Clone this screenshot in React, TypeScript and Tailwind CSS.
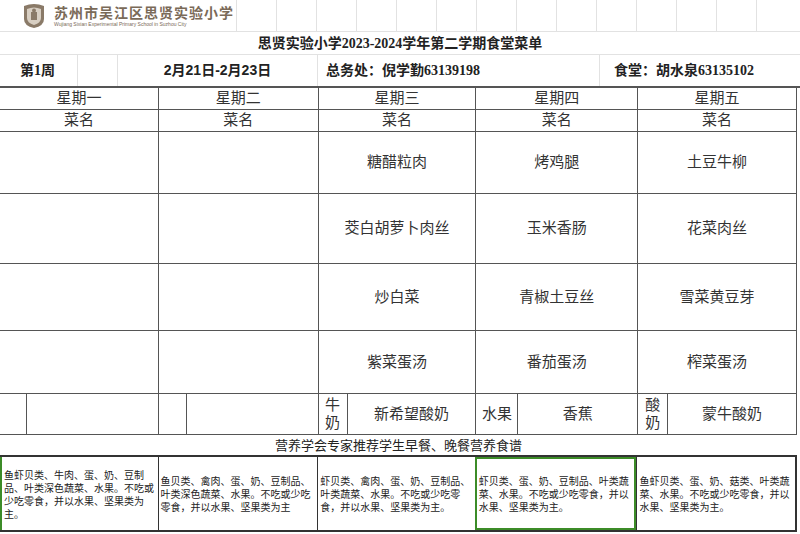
const W = ['w-[158px]', 'w-[160px]', 'w-[158px]', 'w-[162px]', 'w-[159px]'];
const font = { fontFamily: '"Liberation Serif","Noto Sans CJK SC",serif' };

const dishes = [
  ['糖醋粒肉', '烤鸡腿', '土豆牛柳', 'h-[62px]'],
  ['茭白胡萝卜肉丝', '玉米香肠', '花菜肉丝', 'h-[70px]'],
  ['炒白菜', '青椒土豆丝', '雪菜黄豆芽', 'h-[67px]'],
  ['紫菜蛋汤', '番茄蛋汤', '榨菜蛋汤', 'h-[63px]'],
];

const nutrition = [
  '鱼虾贝类、牛肉、蛋、奶、豆制品、叶类深色蔬菜、水果。不吃或少吃零食，并以水果、坚果类为主。',
  '鱼贝类、禽肉、蛋、奶、豆制品、叶类深色蔬菜、水果。不吃或少吃零食，并以水果、坚果类为主',
  '虾贝类、禽肉、蛋、奶、豆制品、叶类蔬菜、水果。不吃或少吃零食，并以水果、坚果类为主。',
  '虾贝类、蛋、奶、豆制品、叶类蔬菜、水果。不吃或少吃零食，并以水果、坚果类为主。',
  '鱼虾贝类、蛋、奶、菇类、叶类蔬菜、水果。不吃或少吃零食，并以水果、坚果类为主。',
];

function Logo() {
  return (
    <div className="flex items-center gap-2 pl-[22px] h-[32px] whitespace-nowrap">
      <svg width="24" height="26" viewBox="0 0 24 26">
        <path d="M2 3 Q12 -1 22 3 L22 16 Q22 23 12 25 Q2 23 2 16 Z" fill="#8a7a68" />
        <path d="M5 6 Q12 3 19 6 L19 15 Q19 20 12 22 Q5 20 5 15 Z" fill="#d8cfc3" />
        <rect x="9" y="9" width="6" height="8" fill="#8a7a68" />
        <circle cx="12" cy="7.5" r="2" fill="#8a7a68" />
      </svg>
      <div className="flex flex-col leading-none">
        <span className="text-[14px] font-bold text-[#7a6a58] tracking-[1px]" style={{ fontFamily: '"Noto Sans CJK SC",serif' }}>苏州市吴江区思贤实验小学</span>
        <span className="text-[5px] text-[#7a6a58] mt-[3px]" style={{ fontFamily: '"Liberation Sans",sans-serif' }}>Wujiang Sixian Experimental Primary School in Suzhou City</span>
      </div>
    </div>
  );
}

export default function App() {
  return (
    <div className="w-[800px] h-[534px] bg-white overflow-hidden text-[#222]" style={font}>
      <div className="h-[32px] flex border-b border-[#e2e2e2]">
        <div className="w-[236px] shrink-0"><Logo /></div>
        {[40, 40, 40, 40, 40, 40, 40, 40, 40, 40, 40, 40, 40, 40].map((w, i) => (
          <div key={i} className="border-l border-[#e2e2e2] h-full shrink-0" style={{ width: w }} />
        ))}
      </div>
      <div className="h-[23px] flex items-center justify-center text-[14px] font-bold border-b border-[#e2e2e2]">
        思贤实验小学2023-2024学年第二学期食堂菜单
      </div>
      <div className="h-[33px] flex items-center text-[14px] font-bold border-b-2 border-[#555]">
        <div className="w-[78px] pl-[20px] h-full flex items-center border-r border-[#e2e2e2]">第1周</div>
        <div className="w-[40px] h-full border-r border-[#e2e2e2]" />
        <div className="w-[200px] h-full flex items-center justify-center border-r border-[#e2e2e2]" style={{ fontFamily: '"Liberation Sans","Noto Sans CJK SC",sans-serif' }}>2月21日-2月23日</div>
        <div className="w-[282px] pl-[8px] h-full flex items-center border-r border-[#e2e2e2]">总务处：倪学勤63139198</div>
        <div className="flex-1 pl-[14px] h-full flex items-center">食堂：胡水泉63135102</div>
      </div>
      <div className="w-[797px] border-r border-[#555]">
        {[['星期一', '星期二', '星期三', '星期四', '星期五'], ['菜名', '菜名', '菜名', '菜名', '菜名']].map((row, ri) => (
          <div key={ri} className="flex h-[22px] border-b border-[#555] text-[15px] text-[#333]">
            {row.map((t, i) => (
              <div key={i} className={`${W[i]} flex items-center justify-center ${i ? 'border-l border-[#555]' : ''}`}>{t}</div>
            ))}
          </div>
        ))}
        {dishes.map((d, ri) => (
          <div key={ri} className={`flex ${d[3]} border-b border-[#555] text-[15px] text-[#333]`}>
            <div className={W[0]} />
            <div className={`${W[1]} border-l border-[#555]`} />
            {[d[0], d[1], d[2]].map((t, i) => (
              <div key={i} className={`${W[i + 2]} border-l border-[#555] flex items-center justify-center`}>{t}</div>
            ))}
          </div>
        ))}
        <div className="flex h-[41px] border-b border-[#555] text-[15px] text-[#333]">
          <div className="w-[158px] flex"><div className="w-[27px] border-r border-[#555]" /></div>
          <div className="w-[160px] flex border-l border-[#555]"><div className="w-[28px] border-r border-[#555]" /></div>
          <div className="w-[158px] flex border-l border-[#555]">
            <div className="w-[29px] border-r border-[#555] flex flex-col items-center justify-center leading-[18px]"><span>牛</span><span>奶</span></div>
            <div className="flex-1 flex items-center justify-center">新希望酸奶</div>
          </div>
          <div className="w-[162px] flex border-l border-[#555]">
            <div className="w-[42px] border-r border-[#555] flex items-center justify-center">水果</div>
            <div className="flex-1 flex items-center justify-center">香蕉</div>
          </div>
          <div className="w-[159px] flex border-l border-[#555]">
            <div className="w-[30px] border-r border-[#555] flex flex-col items-center justify-center leading-[18px]"><span>酸</span><span>奶</span></div>
            <div className="flex-1 flex items-center justify-center">蒙牛酸奶</div>
          </div>
        </div>
      </div>
      <div className="h-[22px] w-[797px] flex items-center justify-center text-[13px] border-b-2 border-[#333]" style={{ fontFamily: '"Noto Sans CJK SC",sans-serif' }}>
        营养学会专家推荐学生早餐、晚餐营养食谱
      </div>
      <div className="flex w-[797px] h-[75px] border-b-2 border-r-2 border-[#333] text-[10px] leading-[13px]" style={{ fontFamily: '"Noto Sans CJK SC",sans-serif' }}>
        {nutrition.map((t, i) => (
          <div key={i} className={`${W[i]} flex items-center px-[2px] ${i === 0 ? 'border-l-2 border-[#3c8c28]' : i === 3 ? 'border-2 border-[#3c8c28]' : 'border-l border-[#333]'}`}>
            <p>{t}</p>
          </div>
        ))}
      </div>
    </div>
  );
}
